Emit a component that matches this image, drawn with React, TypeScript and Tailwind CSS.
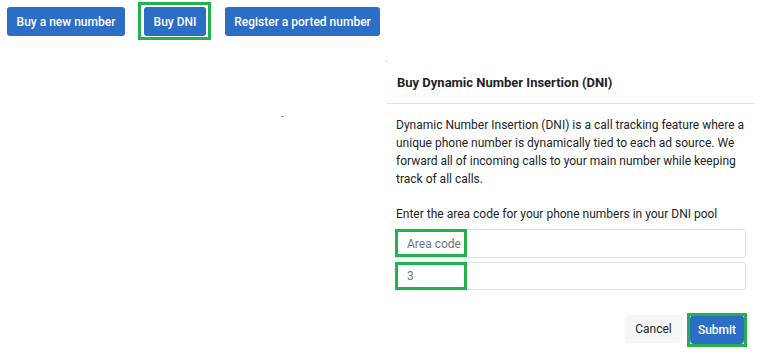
const blueBtn =
  'flex h-[29px] items-center justify-center rounded-[3px] bg-[#2c6dc5] text-[12px] font-medium text-white';

function Marker({ className }: { className: string }) {
  return <span className={`pointer-events-none absolute border-[3px] border-[#22b14c] ${className}`} />;
}

export default function App() {
  return (
    <div className="relative h-[357px] w-[761px] overflow-hidden bg-white font-['Roboto',sans-serif] text-[#212529]">
      <div className="flex gap-[19px] pl-[7px] pt-[7px]">
        <button type="button" className={`${blueBtn} w-[118px]`}>
          Buy a new number
        </button>
        <div className="relative">
          <button type="button" className={`${blueBtn} w-[62px]`}>
            Buy DNI
          </button>
          <Marker className="-bottom-[4px] -left-[6px] -right-[5px] -top-[5px]" />
        </div>
        <button type="button" className={`${blueBtn} w-[155px]`}>
          Register a ported number
        </button>
      </div>

      <span className="absolute left-[281px] top-[116px] h-px w-[3px] bg-[#9a9a9a]" />
      <span className="absolute left-[386px] top-[61px] h-px w-px bg-[#b0b0b0]" />

      <div className="ml-[386px] mt-[24px] w-[369px]">
        <div className="flex h-[44px] items-center border-b border-[#e1e3e6] pl-[11px] pt-[2px] text-[13px] font-bold">
          Buy Dynamic Number Insertion (DNI)
        </div>
        <div className="pl-[10px] pr-[9px] pt-[12px]">
          <p className="text-[12px] leading-[18px]">
            Dynamic Number Insertion (DNI) is a call tracking feature where a unique phone number is dynamically tied to
            each ad source. We forward all of incoming calls to your main number while keeping track of all calls.
          </p>
          <p className="mt-[17px] text-[12px] leading-[18px]">
            Enter the area code for your phone numbers in your DNI pool
          </p>
          <div className="mt-[6px] flex flex-col gap-[4px]">
            <div className="relative">
              <input
                placeholder="Area code"
                className="h-[29px] w-full rounded-[3px] border border-[#dde4ec] px-[10px] text-[12px] text-[#6c757d] outline-none placeholder:text-[#6c757d]"
              />
              <Marker className="left-[-1px] top-0 h-[28px] w-[72px]" />
            </div>
            <div className="relative">
              <input
                defaultValue="3"
                className="h-[28px] w-full rounded-[3px] border border-[#dde4ec] px-[10px] text-[12px] text-[#6c757d] outline-none"
              />
              <Marker className="left-[-1px] top-0 h-[28px] w-[72px]" />
            </div>
          </div>
          <div className="mt-[25px] flex justify-end gap-[8px] pr-[2px]">
            <button
              type="button"
              className="flex h-[28px] w-[57px] items-center justify-center rounded-[4px] bg-[#f5f6f8] text-[12px] text-[#212529]"
            >
              Cancel
            </button>
            <div className="relative">
              <button type="button" className={`${blueBtn} h-[28px] w-[54px] rounded-[4px]`}>
                Submit
              </button>
              <Marker className="-bottom-[3px] -left-[3px] -right-[3px] -top-[2px]" />
            </div>
          </div>
        </div>
      </div>
    </div>
  );
}
